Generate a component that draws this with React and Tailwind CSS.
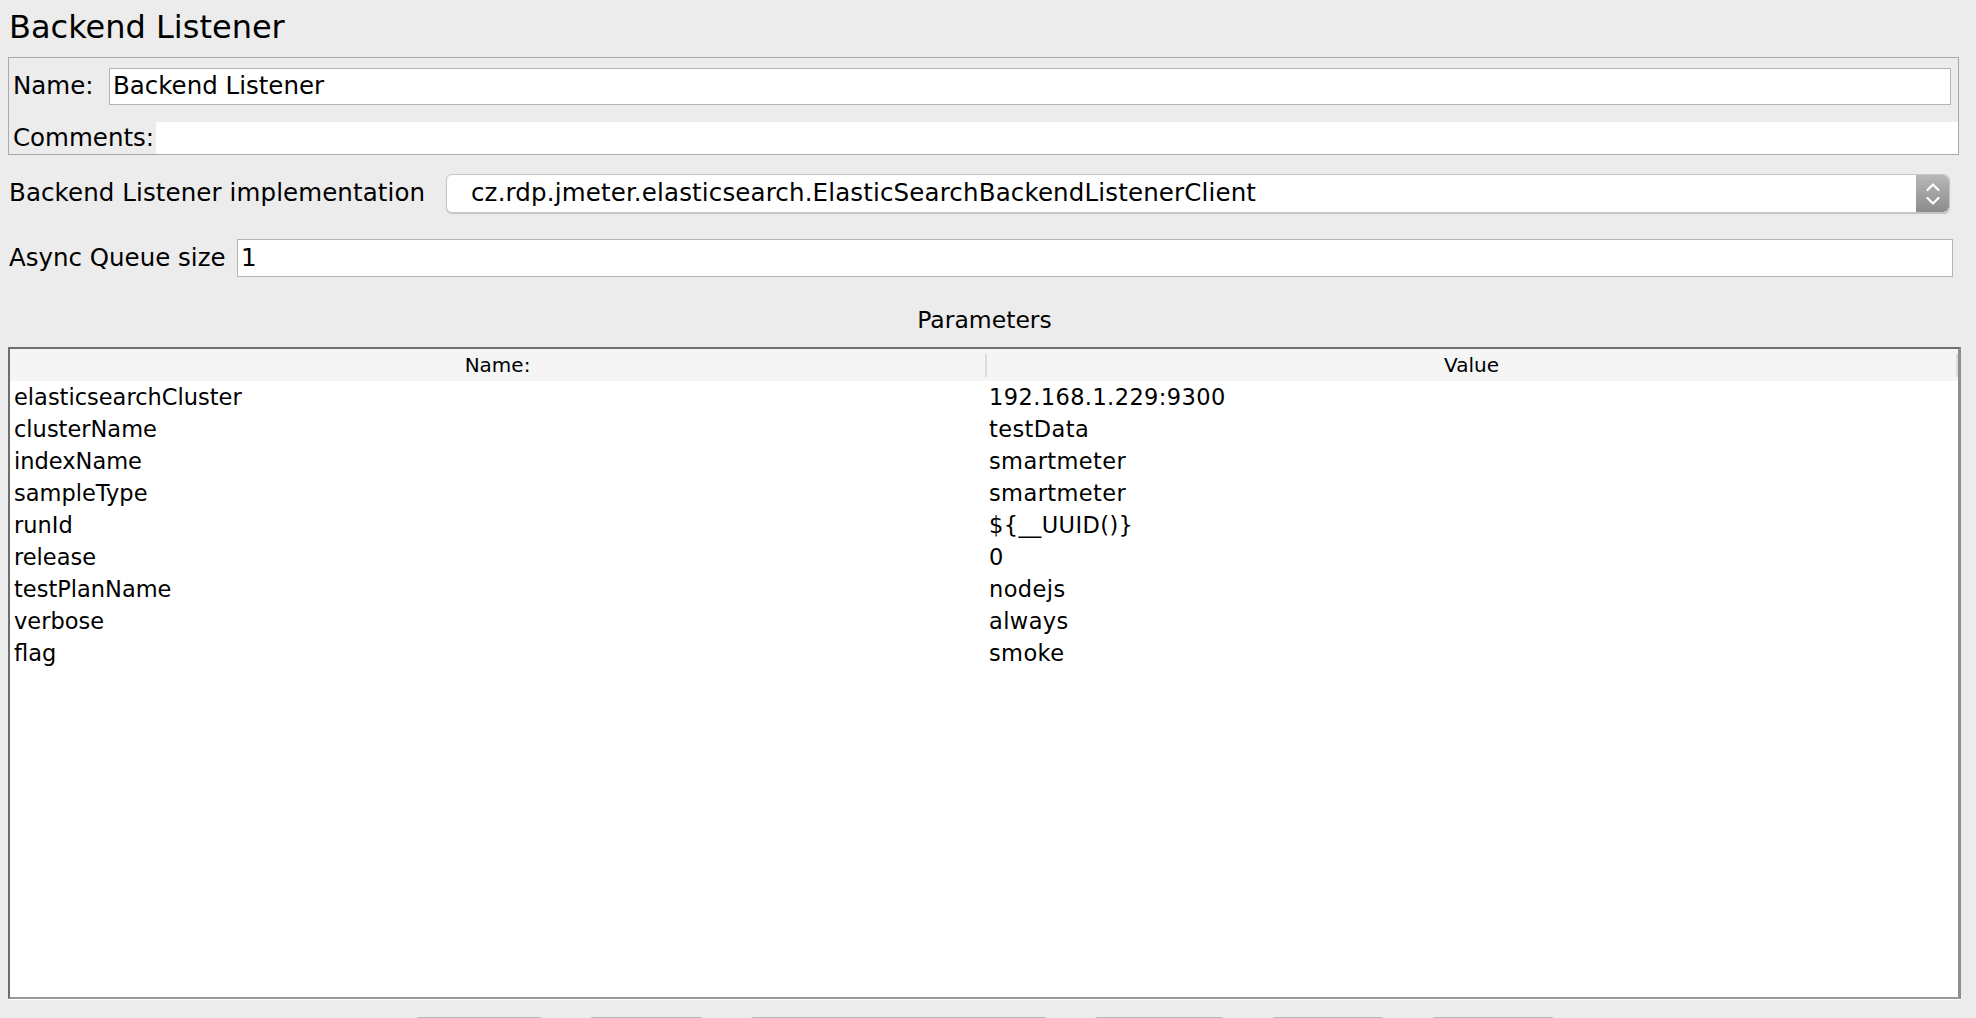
import React from 'react';

const params = [
  ['elasticsearchCluster', '192.168.1.229:9300'],
  ['clusterName', 'testData'],
  ['indexName', 'smartmeter'],
  ['sampleType', 'smartmeter'],
  ['runId', '${__UUID()}'],
  ['release', '0'],
  ['testPlanName', 'nodejs'],
  ['verbose', 'always'],
  ['flag', 'smoke'],
];

const bottomButtons = [130, 117, 300, 133, 116, 126];

const Stepper = () => (
  <div className="w-[33px] h-full rounded-r-[6px] bg-gradient-to-b from-[#b8b8b8] to-[#8c8c8c] flex items-center justify-center">
    <svg width="16" height="26" viewBox="0 0 16 26" fill="none" stroke="white" strokeWidth="2.2" strokeLinecap="round" strokeLinejoin="round">
      <path d="M2.5 9 L8 3.5 L13.5 9" />
      <path d="M2.5 17 L8 22.5 L13.5 17" />
    </svg>
  </div>
);

const App = () => {
  return (
    <div className="w-[1976px] h-[1018px] overflow-hidden bg-[#ececec] text-black font-['DejaVu_Sans',sans-serif] text-[24.5px] pl-[8px] pr-[15px]">
      {/* title */}
      <div className="h-[57px] flex items-center pl-[1px] pb-[3px] text-[32px]">Backend Listener</div>

      {/* name / comments panel */}
      <div className="mr-[2px] h-[98px] border border-[#a9a9a9] flex flex-col">
        <div className="pt-[10px] pl-[4px] pr-[7px] flex items-center">
          <span className="w-[96px]">Name:</span>
          <div className="flex-1 h-[37px] border border-[#b4b4b4] bg-white pl-[3px] flex items-center">Backend Listener</div>
        </div>
        <div className="mt-auto h-[32px] flex items-center">
          <span className="w-[147px] pl-[4px]">Comments:</span>
          <div className="flex-1 h-full bg-white" />
        </div>
      </div>

      {/* implementation select */}
      <div className="mt-[19px] h-[39px] flex items-center pl-[1px] mr-[11px]">
        <span className="w-[437px] tracking-[0.1px]">Backend Listener implementation</span>
        <div className="flex-1 h-full flex rounded-[6px] border border-[#c6c6c6] bg-white shadow-[0_1px_1px_rgba(0,0,0,0.18)]">
          <div className="flex-1 flex items-center pl-[24px] tracking-[0.15px]">cz.rdp.jmeter.elasticsearch.ElasticSearchBackendListenerClient</div>
          <Stepper />
        </div>
      </div>

      {/* async queue */}
      <div className="mt-[26px] h-[38px] flex items-center pl-[1px] mr-[8px]">
        <span className="w-[228px]">Async Queue size</span>
        <div className="flex-1 h-full border border-[#b4b4b4] bg-white pl-[3px] flex items-center">1</div>
      </div>

      {/* parameters caption */}
      <div className="h-[70px] pt-[18px] flex items-center justify-center text-[23.5px]">Parameters</div>

      {/* table */}
      <div className="h-[652px] flex flex-col border-t-2 border-l-2 border-[#6e6e6e] border-r-[3px] border-r-[#8e8e8e] border-b-2 border-b-[#999999] bg-white shadow-[0_1px_0_#ffffff]">
        <div className="h-[32px] bg-[#f5f5f5] grid grid-cols-[975px_1fr] text-[20px]">
          <div className="flex items-center justify-center">Name:</div>
          <div className="relative flex items-center justify-center">
            <div className="absolute left-0 top-[5px] bottom-[4px] w-[2px] bg-[#dcdcdc]" />
            Value
            <div className="absolute right-0 top-[5px] bottom-[4px] w-[2px] bg-[#dcdcdc]" />
          </div>
        </div>
        <div className="flex-1 text-[22.5px]">
          {params.map(([name, value]) => (
            <div key={name} className="h-[32px] grid grid-cols-[975px_1fr] items-center">
              <div className="pl-[4px]">{name}</div>
              <div className="pl-[4px] tracking-[0.4px]">{value}</div>
            </div>
          ))}
        </div>
      </div>

      {/* bottom buttons, mostly cut off */}
      <div className="mt-[18px] flex justify-center gap-[44px]">
        {bottomButtons.map((w, i) => (
          <div key={i} style={{ width: w }} className="h-[30px] rounded-[5px] border border-[#b6b6b6] bg-white" />
        ))}
      </div>
    </div>
  );
};

export default App;
